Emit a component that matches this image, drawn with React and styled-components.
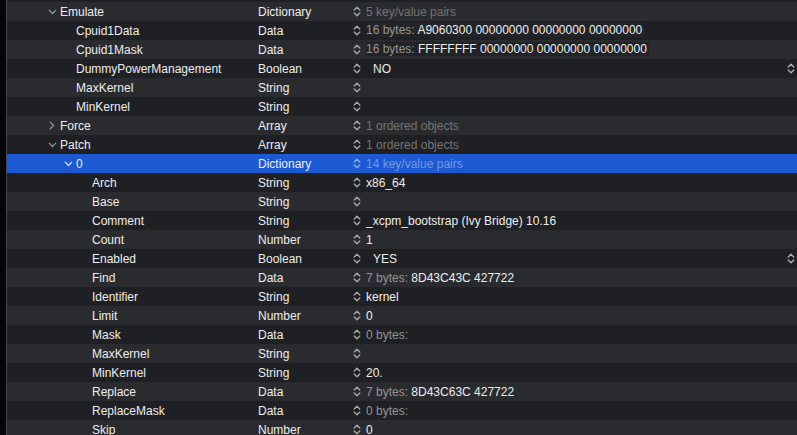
import React from "react";
import styled, { createGlobalStyle } from "styled-components";

const Global = createGlobalStyle`
  html, body { margin: 0; padding: 0; background: #000; }
  body { font-family: "Liberation Sans", Arial, sans-serif; font-size: 12px; overflow: hidden; }
`;

const Page = styled.div`
  display: flex;
  width: 797px;
  height: 435px;
  overflow: hidden;
  background: #000;
`;

const Gutter = styled.div`
  width: 6px;
  flex: none;
  background: #050505;
  border-right: 1px solid #48484a;
`;

const Table = styled.div`
  flex: 1;
  display: flex;
  flex-direction: column;
  background: #1f2023;
`;

const TopSliver = styled.div`
  height: 2px;
  flex: none;
  background: #1f2023;
`;

const Row = styled.div`
  display: grid;
  grid-template-columns: 251px 95px 1fr 10px;
  height: 19px;
  flex: none;
  align-items: center;
  background: ${(p) => (p.$selected ? "#1c59d3" : p.$odd ? "#1f2023" : "#2a2b2e")};
  color: #ededef;
  white-space: nowrap;
`;

const KeyCell = styled.div`
  display: flex;
  align-items: center;
  padding-left: ${(p) => 37 + p.$level * 16}px;
  height: 100%;
`;

const Disclosure = styled.span`
  width: 16px;
  flex: none;
  display: flex;
  align-items: center;
  justify-content: center;
  color: ${(p) => (p.$selected ? "#d6e2fa" : "#9a9a9d")};
`;

const TypeCell = styled.div``;

const ValueCell = styled.div`
  display: flex;
  align-items: center;
  height: 100%;
`;

const StepperBox = styled.span`
  width: 13px;
  flex: none;
  display: flex;
  align-items: center;
  color: ${(p) => (p.$selected ? "#8fb1ee" : "#a9a9ac")};
`;

const ValueText = styled.span`
  color: ${(p) =>
    p.$kind === "placeholder"
      ? p.$selected
        ? "#6f9ae6"
        : "#737377"
      : "#ededef"};
  padding-left: ${(p) => (p.$popup ? "7px" : "0")};
`;

const DataField = styled.span`
  background: ${(p) => (p.$odd ? "#232427" : "#222326")};
  padding-right: 2px;
  line-height: 17px;
`;

const Prefix = styled.span`
  color: #949497;
`;

const EndStepper = styled.div`
  display: flex;
  align-items: center;
  color: #b0b0b3;
`;

const ChevronDown = () => (
  <svg width="9" height="6" viewBox="0 0 9 6">
    <polyline points="1.2,1.2 4.5,4.5 7.8,1.2" fill="none" stroke="currentColor" strokeWidth="1.2" strokeLinecap="round" strokeLinejoin="round" />
  </svg>
);

const ChevronRight = () => (
  <svg width="6" height="9" viewBox="0 0 6 9">
    <polyline points="1.2,1.2 4.5,4.5 1.2,7.8" fill="none" stroke="currentColor" strokeWidth="1.2" strokeLinecap="round" strokeLinejoin="round" />
  </svg>
);

const Stepper = () => (
  <svg width="8" height="11" viewBox="0 0 8 11">
    <polyline points="1.2,4 4,1.2 6.8,4" fill="none" stroke="currentColor" strokeWidth="1.3" strokeLinecap="round" strokeLinejoin="round" />
    <polyline points="1.2,7 4,9.8 6.8,7" fill="none" stroke="currentColor" strokeWidth="1.3" strokeLinecap="round" strokeLinejoin="round" />
  </svg>
);

const rows = [
  { level: 0, key: "Emulate", disc: "open", type: "Dictionary", value: "5 key/value pairs", kind: "placeholder" },
  { level: 1, key: "Cpuid1Data", type: "Data", prefix: "16 bytes: ", value: "A9060300 00000000 00000000 00000000", kind: "data", field: true },
  { level: 1, key: "Cpuid1Mask", type: "Data", prefix: "16 bytes: ", value: "FFFFFFFF 00000000 00000000 00000000", kind: "data", field: true },
  { level: 1, key: "DummyPowerManagement", type: "Boolean", value: "NO", popup: true },
  { level: 1, key: "MaxKernel", type: "String", value: "" },
  { level: 1, key: "MinKernel", type: "String", value: "" },
  { level: 0, key: "Force", disc: "closed", type: "Array", value: "1 ordered objects", kind: "placeholder" },
  { level: 0, key: "Patch", disc: "open", type: "Array", value: "1 ordered objects", kind: "placeholder" },
  { level: 1, key: "0", disc: "open", type: "Dictionary", value: "14 key/value pairs", kind: "placeholder", selected: true },
  { level: 2, key: "Arch", type: "String", value: "x86_64" },
  { level: 2, key: "Base", type: "String", value: "" },
  { level: 2, key: "Comment", type: "String", value: "_xcpm_bootstrap (Ivy Bridge) 10.16" },
  { level: 2, key: "Count", type: "Number", value: "1" },
  { level: 2, key: "Enabled", type: "Boolean", value: "YES", popup: true },
  { level: 2, key: "Find", type: "Data", prefix: "7 bytes: ", value: "8D43C43C 427722", kind: "data" },
  { level: 2, key: "Identifier", type: "String", value: "kernel" },
  { level: 2, key: "Limit", type: "Number", value: "0" },
  { level: 2, key: "Mask", type: "Data", prefix: "0 bytes:", value: "", kind: "data" },
  { level: 2, key: "MaxKernel", type: "String", value: "" },
  { level: 2, key: "MinKernel", type: "String", value: "20." },
  { level: 2, key: "Replace", type: "Data", prefix: "7 bytes: ", value: "8D43C63C 427722", kind: "data" },
  { level: 2, key: "ReplaceMask", type: "Data", prefix: "0 bytes:", value: "", kind: "data" },
  { level: 2, key: "Skip", type: "Number", value: "0" },
];

function Value({ r, odd }) {
  if (r.kind === "data") {
    const inner = (
      <>
        <Prefix>{r.prefix}</Prefix>
        {r.value}
      </>
    );
    return <ValueText>{r.field ? <DataField $odd={odd}>{inner}</DataField> : inner}</ValueText>;
  }
  return (
    <ValueText $kind={r.kind} $selected={r.selected} $popup={r.popup}>
      {r.value}
    </ValueText>
  );
}

export default function App() {
  return (
    <>
      <Global />
      <Page>
        <Gutter />
        <Table>
          <TopSliver />
          {rows.map((r, i) => {
            const odd = i % 2 === 1;
            return (
              <Row key={i} $odd={odd} $selected={r.selected}>
                <KeyCell $level={r.level}>
                  <Disclosure $selected={r.selected}>
                    {r.disc === "open" ? <ChevronDown /> : r.disc === "closed" ? <ChevronRight /> : null}
                  </Disclosure>
                  <span>{r.key}</span>
                </KeyCell>
                <TypeCell>{r.type}</TypeCell>
                <ValueCell>
                  <StepperBox $selected={r.selected}>
                    <Stepper />
                  </StepperBox>
                  <Value r={r} odd={odd} />
                </ValueCell>
                <EndStepper>{r.popup ? <Stepper /> : null}</EndStepper>
              </Row>
            );
          })}
        </Table>
      </Page>
    </>
  );
}
